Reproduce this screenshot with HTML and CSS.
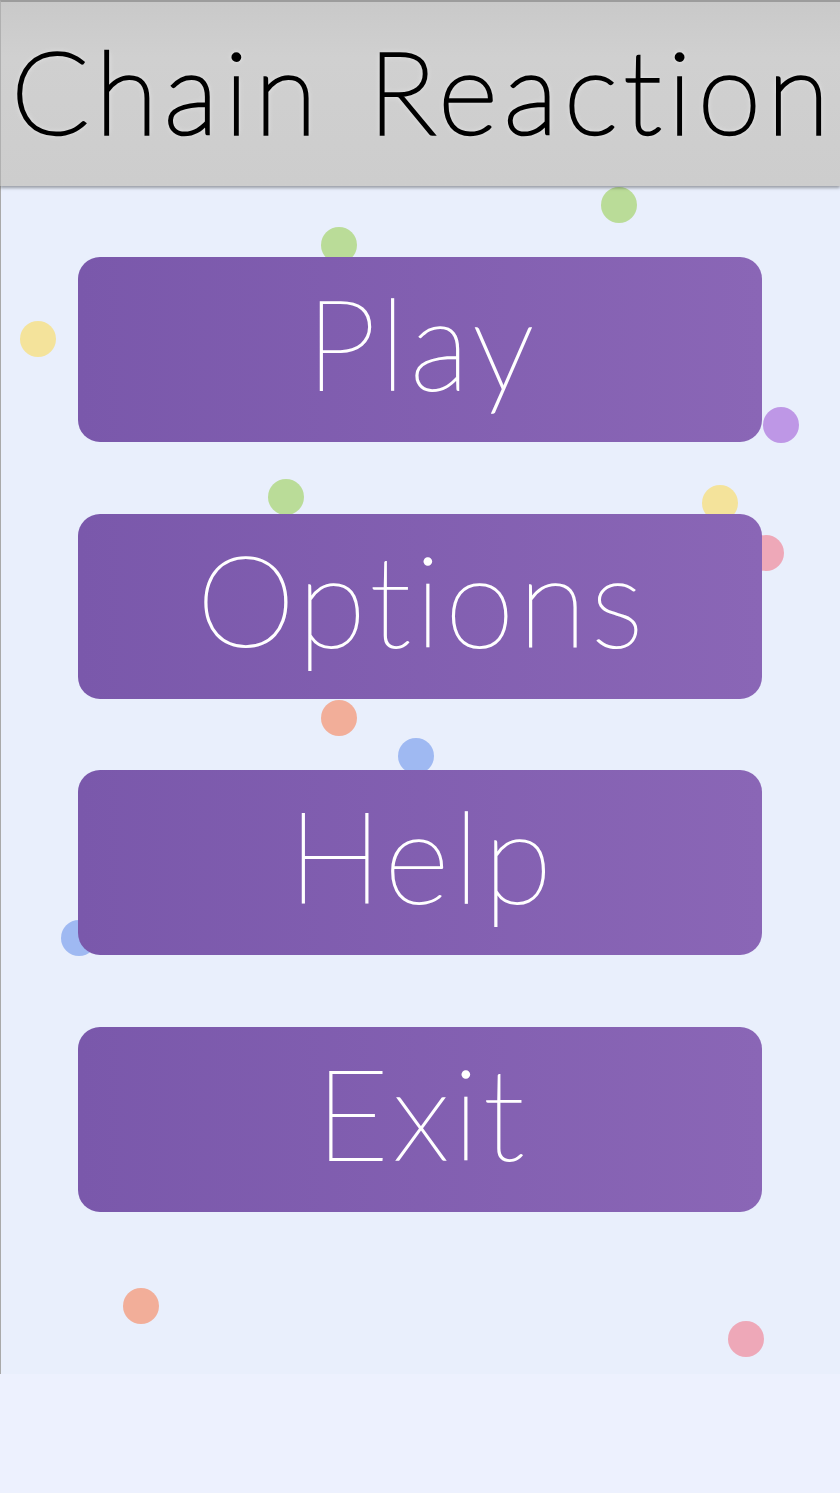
FILE: index.html
```html
<!DOCTYPE html>
<html lang="en">

<head>
    <meta charset="UTF-8">
    <meta name="viewport" content="width=device-width, initial-scale=1.0">
    <title>Chain Reaction</title>
    <link rel="stylesheet" href="styles.css">
</head>

<body>
    <div class="header">
        <h1 class="title">Chain Reaction</h1>
    </div>
    <div class="board">
        <!-- 背景里漂浮的小球 -->
        <span class="dot green" style="left:600px;top:1px"></span>
        <span class="dot green" style="left:320px;top:41px"></span>
        <span class="dot yellow" style="left:19px;top:135px"></span>
        <span class="dot purple" style="left:762px;top:221px"></span>
        <span class="dot green" style="left:267px;top:293px"></span>
        <span class="dot yellow" style="left:701px;top:299px"></span>
        <span class="dot pink" style="left:747px;top:349px"></span>
        <span class="dot orange" style="left:320px;top:514px"></span>
        <span class="dot blue" style="left:397px;top:552px"></span>
        <span class="dot blue" style="left:60px;top:734px"></span>
        <span class="dot orange" style="left:122px;top:1102px"></span>
        <span class="dot pink" style="left:727px;top:1135px"></span>

        <div class="menu">
            <button class="btn">Play</button>
            <button class="btn">Options</button>
            <button class="btn">Help</button>
            <button class="btn">Exit</button>
        </div>
    </div>
</body>

</html>
```

FILE: styles.css
```css
html {
    height: 100%;
}

body {
    margin: 0;
    height: 100%;
    background-color: #edf1fe;
    font-family: Lato, "Open Sans", sans-serif;
}

.header {
    height: 184px;
    border-top: 2px solid #9c9c9c;
    border-left: 1px solid #b0b0b0;
    background: linear-gradient(#c9c9c9, #d0d0d0 30%, #cdcdcd);
    box-shadow: 0 2px 3px rgba(0, 0, 0, 0.35);
    position: relative;
    z-index: 2;
    display: flex;
    align-items: center;
    justify-content: center;
}

.title {
    margin: 0 0 0 6px;
    padding-bottom: 10px;
    font-weight: 100;
    font-size: 114px;
    letter-spacing: 6.5px;
    word-spacing: 6px;
    white-space: nowrap;
    color: #000;
    -webkit-text-stroke: 3.5px #000;
    text-shadow: 0 0 4px #fff, 0 0 7px #fff;
}

.board {
    height: 1188px;
    position: relative;
    background-color: #e9effc;
    border-left: 1px solid #a9a9a9;
}

.dot {
    position: absolute;
    width: 36px;
    height: 36px;
    border-radius: 50%;
}

.green {
    background-color: #badc98;
}

.yellow {
    background-color: #f4e39b;
}

.purple {
    background-color: #be97e6;
}

.pink {
    background-color: #eea8b8;
}

.orange {
    background-color: #f2ae99;
}

.blue {
    background-color: #9fb9f2;
}

.menu {
    position: relative;
    z-index: 1;
    padding-top: 71px;
    display: flex;
    flex-direction: column;
    align-items: center;
    gap: 71.7px;
}

.btn {
    box-sizing: border-box;
    width: 684px;
    height: 185px;
    margin-left: -1px;
    border: none;
    border-radius: 22px;
    background: linear-gradient(to right, #7a58ab, #8a66b6);
    color: #fff;
    font-family: Lato, "Open Sans", sans-serif;
    font-weight: 100;
    font-size: 126px;
    letter-spacing: 4px;
    line-height: 169px;
    padding: 0 0 16px 4px;
    -webkit-text-stroke: 1.6px #fff;
    cursor: pointer;
}
```
